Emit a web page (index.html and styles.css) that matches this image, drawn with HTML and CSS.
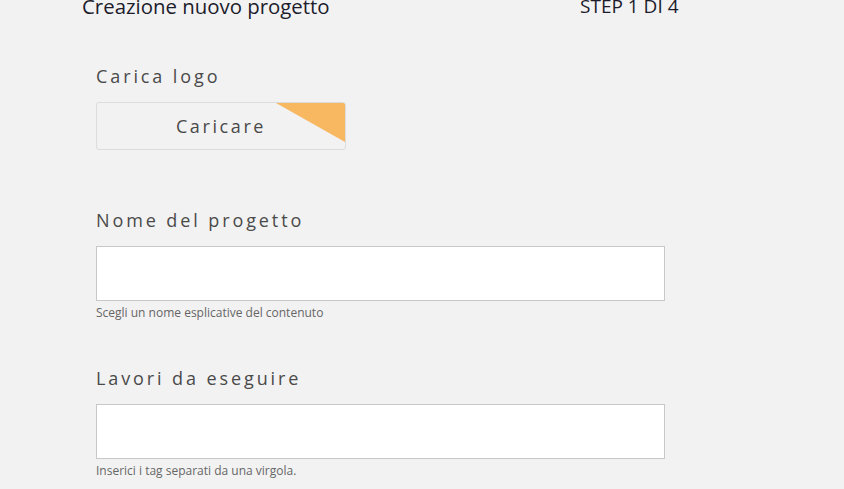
FILE: index.html
```html
<!DOCTYPE html>
<html lang="it">
<head>
  <meta charset="UTF-8" />
  <meta name="viewport" content="width=device-width, initial-scale=1.0" />
  <title>Creazione nuovo progetto</title>
  <link rel="stylesheet" href="styles.css">
</head>
<body>
  <div class="header">
    <span class="title">Creazione nuovo progetto</span>
    <span class="step">STEP 1 DI 4</span>
  </div>

  <div class="form">
    <div class="field logo">
      <label>Carica logo</label>
      <button class="upload">Caricare<span class="corner"></span></button>
    </div>

    <div class="field">
      <label for="nome">Nome del progetto</label>
      <input type="text" id="nome">
      <div class="help">Scegli un nome esplicative del contenuto</div>
    </div>

    <div class="field">
      <label for="lavori">Lavori da eseguire</label>
      <input type="text" id="lavori">
      <div class="help">Inserici i tag separati da una virgola.</div>
    </div>
  </div>
</body>
</html>
```

FILE: styles.css
```css
body {
  margin: 0;
  background-color: #f2f2f2;
  font-family: 'Open Sans', 'Noto Sans', sans-serif;
  overflow: hidden;
}
.header {
  display: flex;
  margin-top: -3px;
  padding-left: 82px;
  font-size: 19px;
  line-height: 19px;
  color: #1c1c2c;
}
.title {
  width: 498px;
  font-size: 20.4px;
}
.form {
  padding: 48px 0 0 96px;
}
.field {
  margin-bottom: 45px;
}
.field.logo {
  margin-bottom: 58px;
}
label {
  display: block;
  font-size: 18px;
  letter-spacing: 2.9px;
  color: #4a4a4a;
  margin-bottom: 14px;
}
.upload {
  position: relative;
  overflow: hidden;
  width: 250px;
  height: 48px;
  background: #f2f2f2;
  border: 1px solid #dcdcdc;
  border-radius: 3px;
  font-family: inherit;
  font-size: 18px;
  letter-spacing: 2.6px;
  color: #4a4a4a;
  cursor: pointer;
}
.corner {
  position: absolute;
  top: 0;
  right: 0;
  width: 69px;
  height: 39px;
  background: #f7b861;
  clip-path: polygon(0 0, 100% 0, 100% 100%);
}
input[type="text"] {
  display: block;
  box-sizing: border-box;
  width: 569px;
  height: 55px;
  background: white;
  border: 1px solid #c8c8c8;
  margin: 0;
}
.help {
  margin-top: 3px;
  font-size: 12px;
  color: #666;
}
```
